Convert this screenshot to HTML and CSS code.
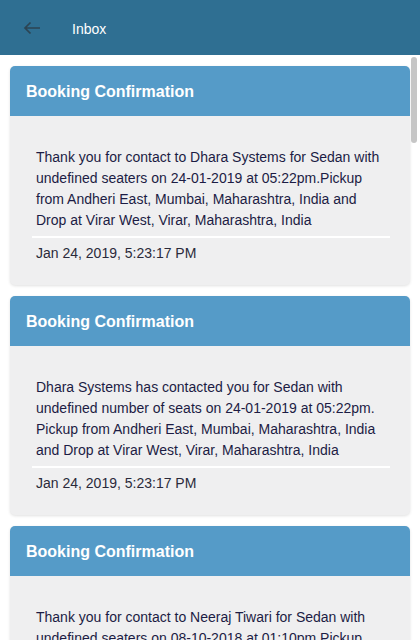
FILE: index.html
```html
<!DOCTYPE html>
<html>
<head>
<meta charset="utf-8">
<link rel="stylesheet" href="styles.css">
</head>
<body>
<div class="app">
  <header class="topbar">
    <button class="back" aria-label="Back">
      <svg width="18" height="14" viewBox="0 0 18 14"><path d="M17 7H2M7.5 1.5L2 7l5.5 5.5" fill="none" stroke="#2c4453" stroke-width="1.7"/></svg>
    </button>
    <span class="title">Inbox</span>
  </header>
  <main class="list">
    <section class="card">
      <h2 class="card-head">Booking Confirmation</h2>
      <div class="card-body">
        <p class="msg">Thank you for contact to Dhara Systems for Sedan with undefined seaters on 24-01-2019 at 05:22pm.Pickup from Andheri East, Mumbai, Maharashtra, India and Drop at Virar West, Virar, Maharashtra, India</p>
        <p class="date">Jan 24, 2019, 5:23:17 PM</p>
      </div>
    </section>
    <section class="card">
      <h2 class="card-head">Booking Confirmation</h2>
      <div class="card-body">
        <p class="msg">Dhara Systems has contacted you for Sedan with undefined number of seats on 24-01-2019 at 05:22pm. Pickup from Andheri East, Mumbai, Maharashtra, India and Drop at Virar West, Virar, Maharashtra, India</p>
        <p class="date">Jan 24, 2019, 5:23:17 PM</p>
      </div>
    </section>
    <section class="card">
      <h2 class="card-head">Booking Confirmation</h2>
      <div class="card-body">
        <p class="msg">Thank you for contact to Neeraj Tiwari for Sedan with undefined seaters on 08-10-2018 at 01:10pm.Pickup from Andheri East, Mumbai, Maharashtra, India and Drop at Virar West, Virar, Maharashtra, India</p>
        <p class="date">Oct 8, 2018, 1:11:02 PM</p>
      </div>
    </section>
  </main>
  <div class="scroll-thumb"></div>
</div>
</body>
</html>
```
FILE: styles.css
```css
html, body {
  margin: 0;
  padding: 0;
  height: 100%;
  overflow: hidden;
}
body {
  font-family: "Liberation Sans", Arial, sans-serif;
  background: #ffffff;
}
.app {
  position: relative;
  height: 100%;
  display: flex;
  flex-direction: column;
}
.topbar {
  flex: 0 0 55px;
  height: 55px;
  background: #2f6f92;
  display: flex;
  align-items: center;
  padding-left: 23px;
  box-sizing: border-box;
}
.back {
  background: none;
  border: 0;
  padding: 0;
  margin: 0;
  width: 18px;
  height: 14px;
  display: flex;
  margin-top: 1px;
}
.title {
  color: #ffffff;
  font-size: 14px;
  margin-left: 31px;
  margin-top: 2px;
}
.list {
  flex: 1 1 auto;
  overflow: hidden;
  padding: 11px 10px 0 10px;
}
.scroll-thumb {
  position: absolute;
  top: 57px;
  right: 3px;
  width: 6px;
  height: 86px;
  background: #c6c6c6;
  border-radius: 3px;
}
.card {
  margin: 0 0 11px 0;
  background: #efeff0;
  border-radius: 5px;
  box-shadow: 0 1px 3px rgba(0, 0, 0, 0.12);
  overflow: hidden;
}
.card-head {
  margin: 0;
  height: 50px;
  background: #559bc8;
  color: #ffffff;
  font-size: 16px;
  font-weight: bold;
  line-height: 51px;
  padding-left: 16px;
}
.card-body {
  padding: 31px 20px 21px 22px;
}
.msg {
  margin: 0;
  padding: 0 0 5px 4px;
  font-size: 14px;
  line-height: 21px;
  color: #1c1c44;
  border-bottom: 2px solid #ffffff;
}
.date {
  margin: 5px 0 0 0;
  padding-left: 4px;
  font-size: 14px;
  line-height: 21px;
  color: #2a2a3a;
}
```
